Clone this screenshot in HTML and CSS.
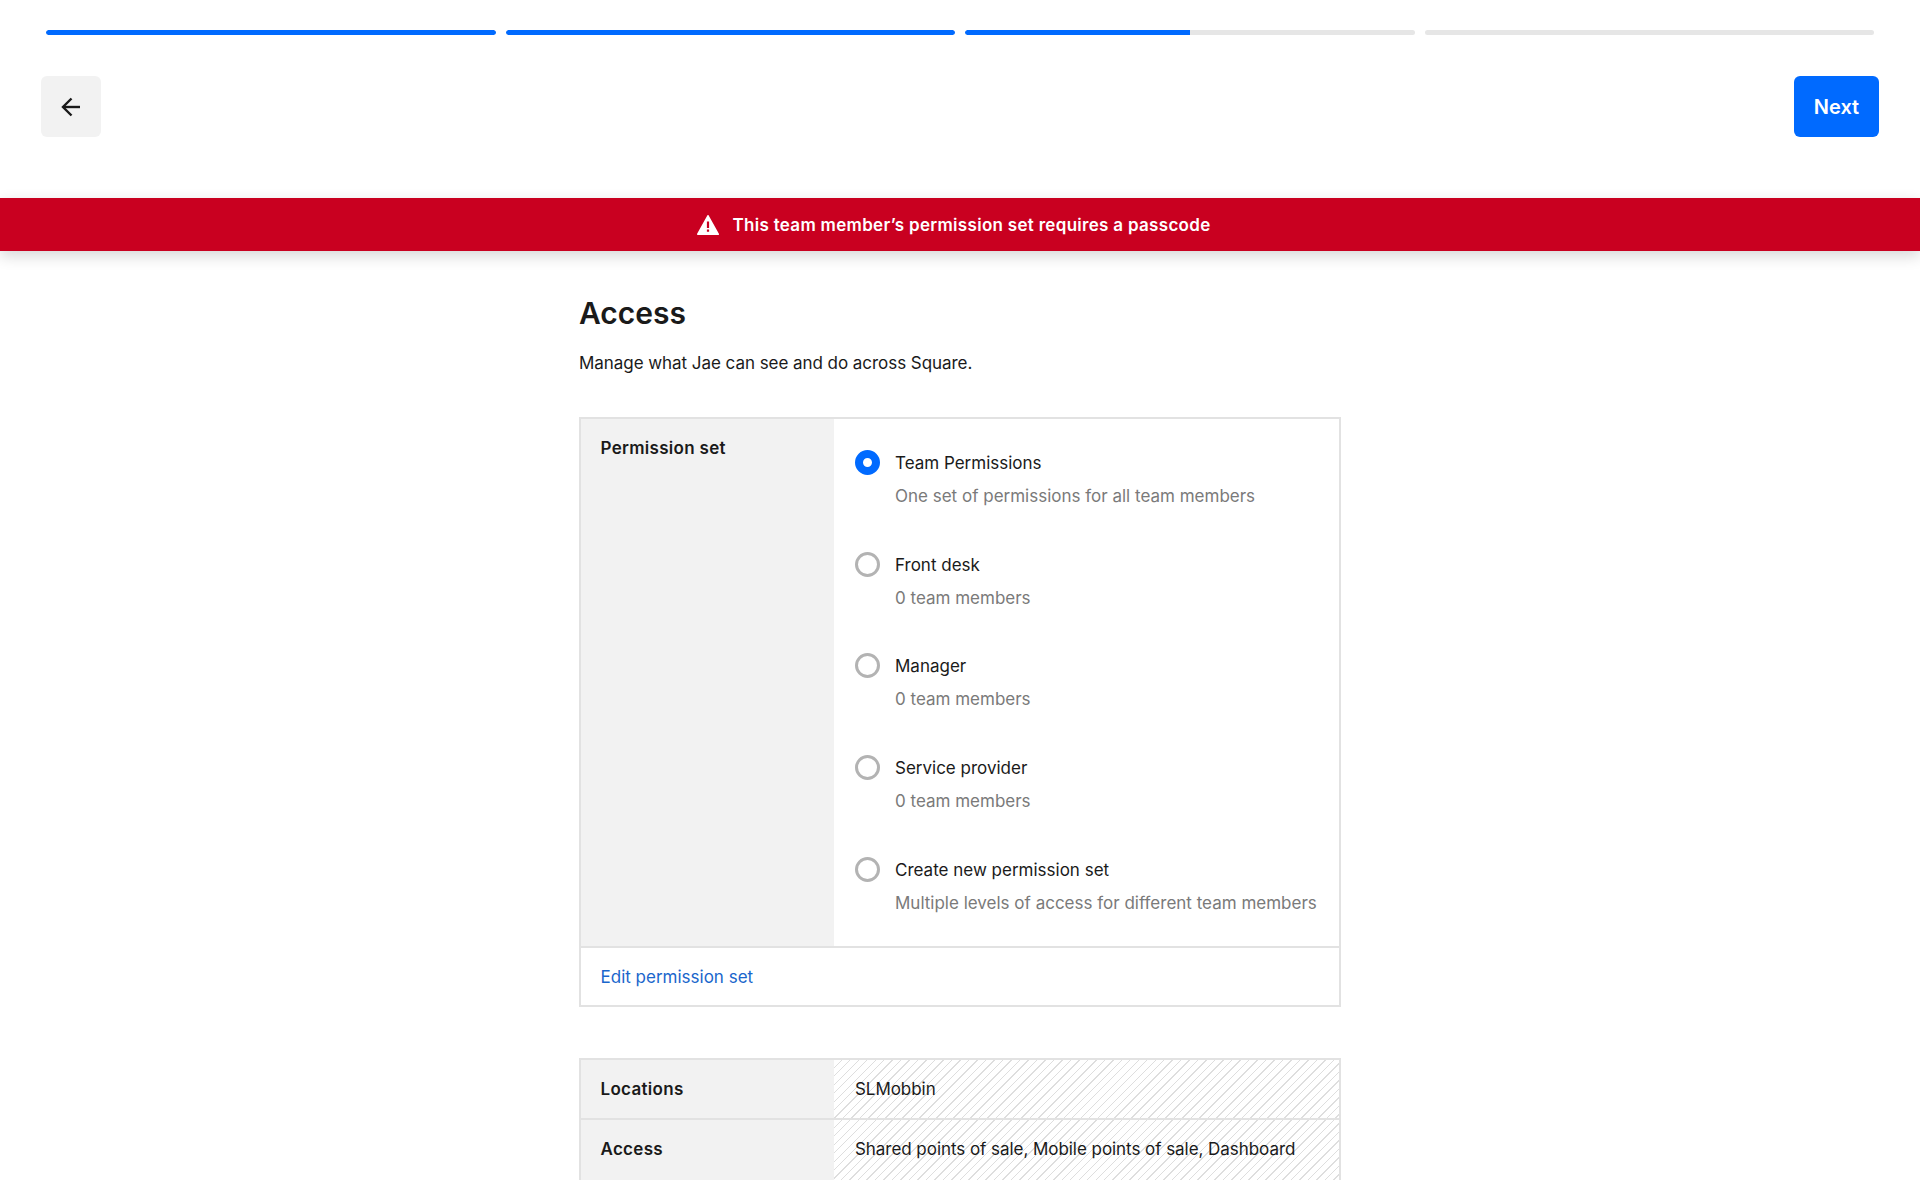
FILE: index.html
```html
<!DOCTYPE html>
<html lang="en">
<head>
<meta charset="utf-8">
<title>Access</title>
<link rel="stylesheet" href="styles.css">
</head>
<body>
<div class="page">
  <div class="progress">
    <div class="seg"><div class="fill full"></div></div>
    <div class="seg"><div class="fill full"></div></div>
    <div class="seg"><div class="fill half"></div></div>
    <div class="seg"></div>
  </div>
  <div class="toolbar">
    <button class="back" aria-label="Back">
      <svg width="24" height="24" viewBox="0 0 24 24" fill="none" stroke="#1a1a1a" stroke-width="2.4">
        <path d="M21 12H4"/><path d="M12.5 3.5L4 12l8.5 8.5"/>
      </svg>
    </button>
    <button class="next">Next</button>
  </div>
  <div class="banner">
    <svg class="warn" width="22" height="20" viewBox="0 0 22 20">
      <path d="M11 .8L21.2 19.2H.8z" fill="#fff" stroke="#fff" stroke-width="1.6" stroke-linejoin="round"/>
      <path d="M9.9 6.5h2.2v6.5H9.9zM9.9 14.6h2.2v2.2H9.9z" fill="#c90020"/>
    </svg>
    <span>This team member’s permission set requires a passcode</span>
  </div>
  <main class="content">
    <h1>Access</h1>
    <p class="lead">Manage what Jae can see and do across Square.</p>
    <section class="card">
      <div class="split">
        <div class="label-col first">Permission set</div>
        <div class="options">
          <div class="option">
            <span class="radio on"></span>
            <div><div class="opt-title">Team Permissions</div><div class="opt-desc">One set of permissions for all team members</div></div>
          </div>
          <div class="option">
            <span class="radio"></span>
            <div><div class="opt-title">Front desk</div><div class="opt-desc">0 team members</div></div>
          </div>
          <div class="option">
            <span class="radio"></span>
            <div><div class="opt-title">Manager</div><div class="opt-desc">0 team members</div></div>
          </div>
          <div class="option">
            <span class="radio"></span>
            <div><div class="opt-title">Service provider</div><div class="opt-desc">0 team members</div></div>
          </div>
          <div class="option">
            <span class="radio"></span>
            <div><div class="opt-title">Create new permission set</div><div class="opt-desc">Multiple levels of access for different team members</div></div>
          </div>
        </div>
      </div>
      <div class="card-foot"><a class="link" href="#">Edit permission set</a></div>
    </section>
    <section class="card lower">
      <div class="row">
        <div class="label-col">Locations</div>
        <div class="value">SLMobbin</div>
      </div>
      <div class="row">
        <div class="label-col">Access</div>
        <div class="value">Shared points of sale, Mobile points of sale, Dashboard</div>
      </div>
    </section>
  </main>
</div>
</body>
</html>
```
FILE: styles.css
```css
* { box-sizing: border-box; }
html, body { margin: 0; background: #fff; }
body { font-family: Inter, "Liberation Sans", sans-serif; color: #1a1a1a; font-size: 17px; }
.page { height: 1180px; overflow: hidden; padding-top: 30px; }

.progress { display: flex; gap: 10px; margin: 0 46px; }
.seg { flex: 1; height: 5px; border-radius: 3px; background: #e6e6e6; overflow: hidden; }
.fill { height: 100%; background: #006aff; border-radius: 3px; }
.fill.full { width: 100%; }
.fill.half { width: 50%; border-radius: 3px 0 0 3px; }

.toolbar { display: flex; justify-content: space-between; margin: 41px 41px 0; }
.back, .next { height: 61px; border: 0; border-radius: 6px; display: flex; align-items: center; justify-content: center; padding: 0; font-family: inherit; }
.back { width: 60px; background: #f2f2f2; }
.next { width: 85px; background: #006aff; color: #fff; font-size: 20px; font-weight: 600; padding-top: 1px; }

.banner { margin-top: 61px; height: 53px; padding-right: 12px; background: #c90020; color: #fff; display: flex; align-items: center; justify-content: center; gap: 13px; font-size: 17px; font-weight: 600; letter-spacing: .3px; box-shadow: 0 5px 14px rgba(0,0,0,.16); position: relative; }
.warn { flex: none; }

.content { width: 762px; margin: 0 auto; }
h1 { margin: 45px 0 0; font-size: 30px; line-height: 34px; font-weight: 600; color: #1a1a1a; }
.lead { margin: 17px 0 0; font-size: 17px; line-height: 32px; letter-spacing: -.05px; }

.card { border: 2px solid #e2e2e2; margin-top: 38px; }
.split { display: flex; }
.label-col { width: 253px; flex: none; background: #f2f2f2; padding: 0 20px 0 19.5px; font-weight: 600; font-size: 17px; letter-spacing: .3px; display: flex; align-items: center; }
.label-col.first { align-items: flex-start; padding-top: 13px; line-height: 33px; }

.options { flex: 1; padding: 28px 20px 26.2px 21px; display: flex; flex-direction: column; gap: 35.7px; }
.option { display: flex; gap: 15px; align-items: flex-start; }
.opt-title, .opt-desc { line-height: 33px; white-space: nowrap; }
.opt-desc { color: #7a7a7a; }
.radio { width: 25px; height: 25px; border-radius: 50%; border: 3px solid #b3b3b3; flex: none; margin-top: 3px; background: #fff; }
.radio.on { background: #fff; border: 8.5px solid #006aff; }

.card-foot { border-top: 2px solid #e2e2e2; height: 59px; padding: 2px 20px 0 19.5px; display: flex; align-items: center; }
.link { color: #1a66cc; text-decoration: none; }

.lower { margin-top: 51px; }
.row { display: flex; height: 58px; }
.row + .row { box-sizing: content-box; border-top: 2px solid #e2e2e2; height: 90px; }
.row + .row .label-col { align-items: flex-start; line-height: 58px; }
.row + .row .value { align-items: flex-start; line-height: 58px; }
.value { flex: 1; display: flex; align-items: center; padding: 0 20px 0 21px; letter-spacing: -.05px; background: repeating-linear-gradient(135deg, #fff 0, #fff 5px, #dedede 5px, #dedede 6px); }
```
